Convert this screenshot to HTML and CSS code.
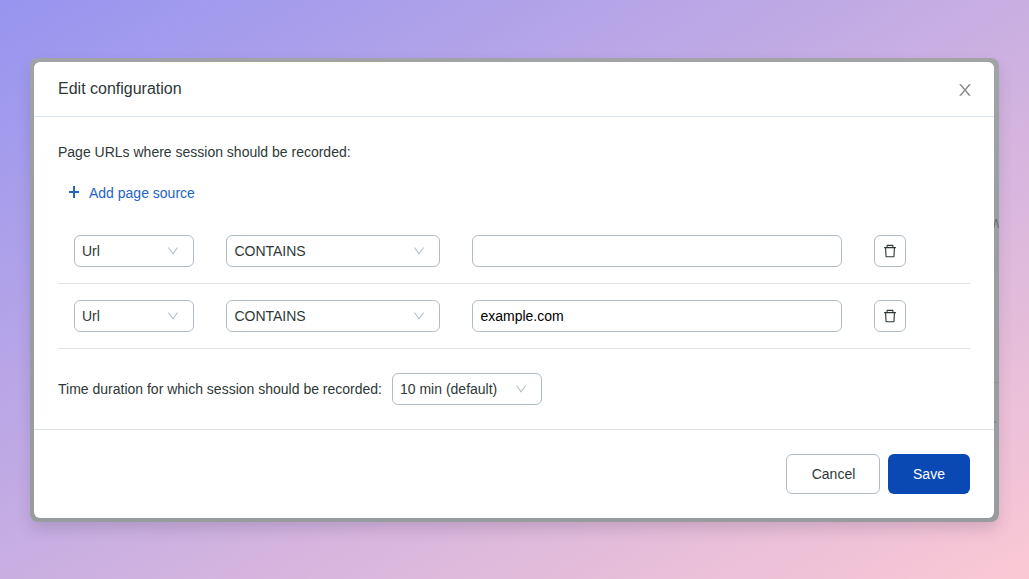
FILE: index.html
```html
<!DOCTYPE html>
<html lang="en">
<head>
<meta charset="utf-8">
<title>Edit configuration</title>
<link rel="stylesheet" href="styles.css">
</head>
<body>
<svg class="defs" width="0" height="0" aria-hidden="true">
  <symbol id="chevron" viewBox="64 64 896 896"><path d="M884 256h-75c-5.1 0-9.9 2.5-12.9 6.6L512 654.2 227.9 262.6c-3-4.1-7.8-6.6-12.9-6.6h-75c-6.5 0-10.3 7.4-6.5 12.7l352.6 486.1c12.8 17.6 39 17.6 51.7 0l352.6-486.1c3.9-5.3.1-12.7-6.4-12.7z"/></symbol>
  <symbol id="trash" viewBox="64 64 896 896"><path d="M360 184h-8c4.4 0 8-3.6 8-8v8h304v-8c0 4.4 3.6 8 8 8h-8v72h72v-80c0-35.3-28.7-64-64-64H352c-35.3 0-64 28.7-64 64v80h72v-72zm504 72H160c-17.7 0-32 14.3-32 32v32c0 4.4 3.6 8 8 8h60.4l24.7 523c1.6 34.1 29.8 61 63.9 61h454c34.2 0 62.3-26.8 63.9-61l24.7-523H888c4.4 0 8-3.6 8-8v-32c0-17.7-14.3-32-32-32zM731.3 840H292.7l-24.2-512h487l-24.2 512z"/></symbol>
</svg>
<main class="frame">
  <div class="strip">
    <span class="behind behind-letter">W</span>
    <span class="behind-line"></span>
    <span class="behind behind-dot">r.</span>
  </div>
  <section class="modal" role="dialog" aria-labelledby="title">
    <header class="modal-header">
      <h1 id="title">Edit configuration</h1>
      <button class="close" aria-label="Close"><svg width="16" height="16" viewBox="64 64 896 896"><path d="M563.8 512l262.5-312.9c4.4-5.2.7-13.1-6.1-13.1h-79.8c-4.7 0-9.2 2.1-12.3 5.7L511.6 449.8 295.1 191.7c-3-3.6-7.5-5.7-12.3-5.7H203c-6.8 0-10.5 7.9-6.1 13.1L459.4 512 196.9 824.9A7.95 7.95 0 00203 838h79.8c4.7 0 9.2-2.1 12.3-5.7l216.5-258.1 216.5 258.1c3 3.6 7.5 5.7 12.3 5.7h79.8c6.8 0 10.5-7.9 6.1-13.1L563.8 512z"/></svg></button>
    </header>
    <div class="modal-body">
      <p class="label">Page URLs where session should be recorded:</p>
      <button class="add"><svg width="12" height="12" viewBox="0 0 12 12"><path d="M5 0h2v5h4v2H7v5H5V7H1V5h4z"/></svg><span>Add page source</span></button>
      <div class="row">
        <div class="select type">Url<svg class="chevron"><use href="#chevron"/></svg></div>
        <div class="select operator">CONTAINS<svg class="chevron"><use href="#chevron"/></svg></div>
        <input class="value" type="text" aria-label="Value">
        <button class="delete" aria-label="Delete"><svg class="trash"><use href="#trash"/></svg></button>
      </div>
      <div class="row">
        <div class="select type">Url<svg class="chevron"><use href="#chevron"/></svg></div>
        <div class="select operator">CONTAINS<svg class="chevron"><use href="#chevron"/></svg></div>
        <input class="value" type="text" aria-label="Value" value="example.com">
        <button class="delete" aria-label="Delete"><svg class="trash"><use href="#trash"/></svg></button>
      </div>
      <div class="duration">
        <span>Time duration for which session should be recorded:</span>
        <div class="select minutes">10 min (default)<svg class="chevron"><use href="#chevron"/></svg></div>
      </div>
    </div>
    <footer class="modal-footer">
      <button class="btn cancel">Cancel</button>
      <button class="btn save">Save</button>
    </footer>
  </section>
</main>
</body>
</html>
```

FILE: styles.css
```css
* { box-sizing: border-box; }
body {
  margin: 0;
  height: 579px;
  padding: 58px 30px 57px;
  overflow: hidden;
  background: linear-gradient(to bottom right, #9795f0, #fbc8d4);
  font: 14px/22px "Liberation Sans", Arial, sans-serif;
  color: #2e3838;
}
button, input { font: inherit; color: inherit; margin: 0; }
svg { fill: currentColor; display: block; }
.defs { position: absolute; }
.frame {
  position: relative;
  height: 464px;
  padding: 4px 5px 4px 4px;
  border-radius: 8px;
  background: linear-gradient(#a1a3a7, #999fa1 30%, #989c9e);
  box-shadow: 0 8px 16px -2px rgba(60, 50, 80, .2);
}
/* Page content left visible between the dialog and the frame edge */
.strip { position: absolute; inset: 0; overflow: hidden; border-radius: 8px; }
.behind { position: absolute; color: #666d73; }
.behind-letter { left: 960px; top: 155px; font-size: 13px; }
.behind-dot { right: 2px; top: 349px; color: #5d7b92; }
.behind-line { position: absolute; right: 0; top: 324px; width: 5px; height: 1px; background: #8b9295; }
.modal {
  position: relative;
  height: 456px;
  border-radius: 6px;
  background: #fff;
  display: flex;
  flex-direction: column;
}
.modal-header {
  height: 55px;
  padding: 0 21px 0 24px;
  border-bottom: 1px solid #dbe4eb;
  display: flex;
  align-items: center;
  justify-content: space-between;
}
h1 { margin: 0; font-size: 16px; font-weight: 400; line-height: 22px; }
.close { border: 0; background: none; padding: 2px 0 0; color: #858585; }
.modal-body { height: 312px; padding: 24px; }
.label { margin: 0; }
.add {
  display: flex;
  align-items: center;
  gap: 9px;
  height: 40px;
  margin-top: 9px;
  padding: 2px 10px 0;
  border: 0;
  background: none;
  color: #2264c5;
}
.add svg { margin-bottom: 2px; }
.row {
  display: flex;
  height: 65px;
  padding: 16px;
  gap: 32px;
  border-bottom: 1px solid #dde3e6;
}
.add + .row { margin-top: 7px; }
.select {
  height: 32px;
  border: 1px solid #b1bdc5;
  border-radius: 6px;
  padding: 0 14px 0 7px;
  display: flex;
  align-items: center;
  justify-content: space-between;
}
.type { width: 120px; }
.operator { width: 214px; padding-left: 7.4px; }
.chevron { width: 12px; height: 12px; color: #b3bec6; }
.value {
  width: 370px;
  height: 32px;
  border: 1px solid #b1bdc5;
  border-radius: 6px;
  padding: 0 7.4px;
  color: #000;
  background: #fff;
}
.delete {
  width: 32px;
  height: 32px;
  border: 1px solid #b1bdc5;
  border-radius: 6px;
  padding: 0;
  background: #fff;
  display: flex;
  align-items: center;
  justify-content: center;
}
.trash { width: 14px; height: 14px; }
.duration { display: flex; align-items: center; gap: 10px; margin-top: 24px; }
.minutes { width: 150px; }
.modal-footer {
  height: 89px;
  padding: 24px;
  border-top: 1px solid #dde3e6;
  display: flex;
  justify-content: flex-end;
  gap: 8px;
}
.btn { height: 40px; border-radius: 6px; padding: 0; }
.cancel { width: 94px; padding-left: 1px; border: 1px solid #b1bdc5; background: #fff; }
.save { width: 82px; border: 0; background: #0a49b4; color: #fff; }
```
